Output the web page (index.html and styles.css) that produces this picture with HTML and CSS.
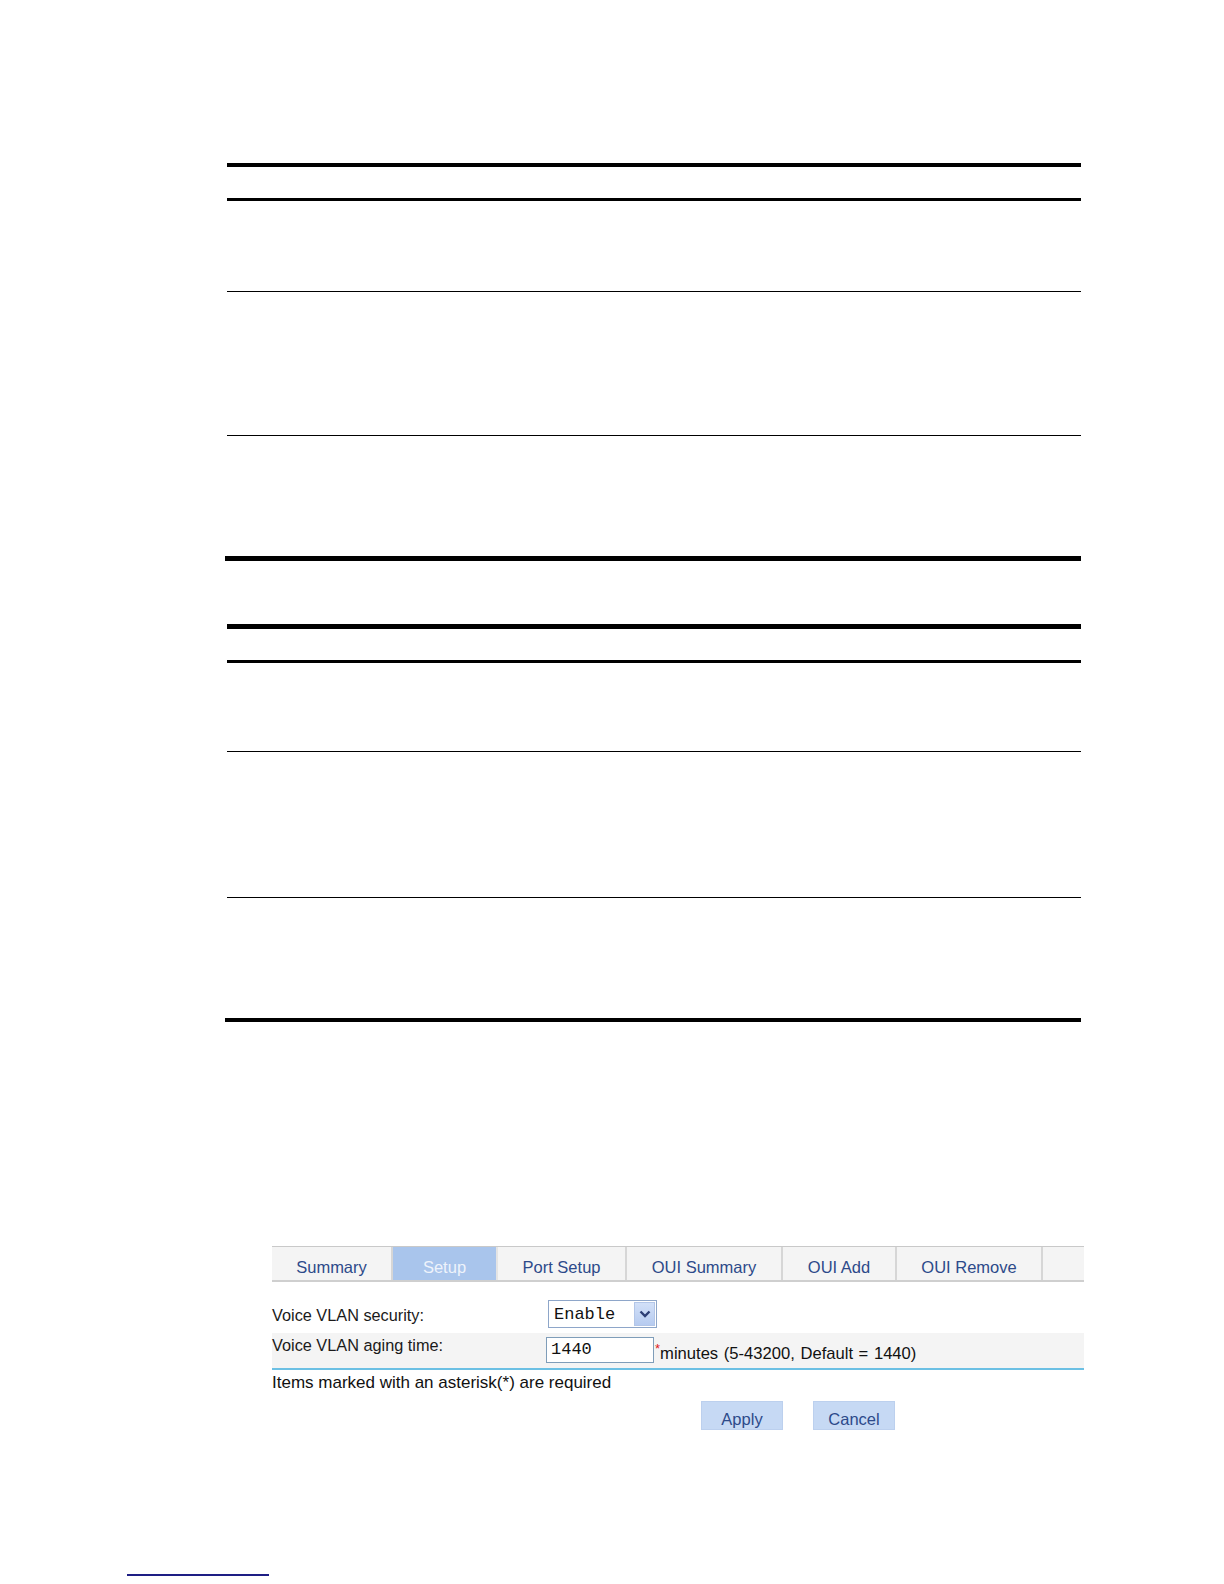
FILE: index.html
```html
<!DOCTYPE html>
<html>
<head>
<meta charset="utf-8">
<link rel="stylesheet" href="styles.css">
</head>
<body>
<div class="page">
  <div class="doc">
    <div class="table t1">
      <div class="rule r4"></div>
      <div class="row h31"></div>
      <div class="rule r3"></div>
      <div class="row h90"></div>
      <div class="rule r1"></div>
      <div class="row h143"></div>
      <div class="rule r1"></div>
      <div class="row h120"></div>
      <div class="rule r5 wide"></div>
    </div>
    <div class="table t2">
      <div class="rule r5"></div>
      <div class="row h31"></div>
      <div class="rule r3"></div>
      <div class="row h88"></div>
      <div class="rule r1"></div>
      <div class="row h145"></div>
      <div class="rule r1"></div>
      <div class="row h120"></div>
      <div class="rule r4 wide"></div>
    </div>
  </div>

  <div class="ui">
    <div class="tabs">
      <div class="tab w121">Summary</div>
      <div class="tab w105 active">Setup</div>
      <div class="tab w129">Port Setup</div>
      <div class="tab w156">OUI Summary</div>
      <div class="tab w114">OUI Add</div>
      <div class="tab w146">OUI Remove</div>
      <div class="tab fill"></div>
    </div>
    <div class="form">
      <div class="frow first">
        <div class="label">Voice VLAN security:</div>
        <div class="select">
          <span class="sel-text">Enable</span>
          <span class="sel-btn">
            <svg width="12" height="8" viewBox="0 0 12 8"><path d="M1.5 1.5 L6 6 L10.5 1.5" fill="none" stroke="#2c3e74" stroke-width="2.4"/></svg>
          </span>
        </div>
      </div>
      <div class="frow second">
        <div class="label">Voice VLAN aging time:</div>
        <div class="input">1440</div>
        <span class="ast">*</span><span class="hint">minutes (5-43200, Default = 1440)</span>
      </div>
    </div>
    <div class="note">Items marked with an asterisk(*) are required</div>
    <div class="buttons">
      <div class="btn">Apply</div>
      <div class="btn">Cancel</div>
    </div>
  </div>

  <div class="footnote"></div>
</div>
</body>
</html>
```

FILE: styles.css
```css
html, body {
  margin: 0;
  padding: 0;
  background: #ffffff;
}

.page {
  padding-top: 163px;
  font-family: "Liberation Sans", Arial, sans-serif;
}

.doc {
  margin-left: 227px;
  width: 854px;
  display: flex;
  flex-direction: column;
  gap: 63px;
}

.table {
  display: flex;
  flex-direction: column;
}

.rule { background: #000; }
.r1 { height: 1px; }
.r3 { height: 3px; }
.r4 { height: 4px; }
.r5 { height: 5px; }
.wide { margin-left: -2px; }

.h31 { height: 31px; }
.h88 { height: 88px; }
.h90 { height: 90px; }
.h120 { height: 120px; }
.h143 { height: 143px; }
.h145 { height: 145px; }

/* UI screenshot */
.ui {
  margin-top: 224px;
  margin-left: 272px;
  width: 812px;
  font-size: 16px;
}

.tabs {
  display: flex;
  height: 33px;
  border-top: 1px solid #c9c9c9;
  border-bottom: 2px solid #cfcfcf;
  background: #f4f4f4;
}

.tab {
  display: flex;
  align-items: center;
  justify-content: center;
  color: #2d4a8a;
  font-size: 16.5px;
  border-right: 2px solid #d6d6d6;
  box-sizing: border-box;
  padding-top: 8px;
}
.tab.active {
  background: #a9c5ec;
  color: #eef3fb;
  border-right-color: #e4e4e4;
}
.w121 { width: 121px; }
.w105 { width: 105px; }
.w129 { width: 129px; }
.w156 { width: 156px; }
.w114 { width: 114px; }
.w146 { width: 146px; }
.tab.fill { flex: 1; border-right: none; }

.form {
  margin-top: 14px;
  border-bottom: 2px solid #6cc0e4;
}

.frow {
  display: flex;
  align-items: flex-start;
  color: #111;
}
.frow.first {
  height: 37px;
}
.frow.second {
  height: 35px;
  background: #f4f4f4;
}

.label {
  width: 274px;
  font-size: 16.3px;
  color: #1a1a1a;
}
.first .label { padding-top: 10px; }
.second .label { padding-top: 3px; }

.select {
  margin-top: 4px;
  margin-left: 2px;
  width: 109px;
  height: 28px;
  box-sizing: border-box;
  border: 1px solid #8ea6c9;
  background: #fff;
  display: flex;
  align-items: center;
  justify-content: space-between;
}
.sel-text {
  font-family: "Liberation Mono", "Courier New", monospace;
  font-size: 17px;
  padding-left: 5px;
  color: #111;
}
.sel-btn {
  width: 21px;
  height: 24px;
  margin-right: 1px;
  background: linear-gradient(#d2e0f8, #b6cbf0);
  border: 1px solid #b3c6e8;
  box-sizing: border-box;
  display: flex;
  align-items: center;
  justify-content: center;
}

.input {
  margin-top: 4px;
  width: 108px;
  height: 26px;
  box-sizing: border-box;
  border: 1px solid #7f9db9;
  background: #fff;
  font-family: "Liberation Mono", "Courier New", monospace;
  font-size: 17px;
  padding-left: 4px;
  line-height: 24px;
  color: #111;
}

.ast {
  color: #e02020;
  font-size: 13px;
  margin-top: 8px;
  margin-left: 1px;
}
.hint {
  font-size: 16.6px;
  margin-top: 11px;
  color: #111;
  word-spacing: 1px;
}

.note {
  margin-top: 3px;
  font-size: 17px;
  color: #111;
  line-height: 20px;
}

.buttons {
  display: flex;
  gap: 30px;
  margin-top: 8px;
  margin-left: 429px;
}
.btn {
  width: 82px;
  height: 29px;
  box-sizing: border-box;
  background: #c6d9f4;
  border: 1px solid #bcd0ee;
  color: #2d4a8a;
  font-size: 16.5px;
  display: flex;
  align-items: flex-end;
  justify-content: center;
  line-height: 20px;
}

.footnote {
  margin-top: 144px;
  margin-left: 127px;
  width: 142px;
  height: 2px;
  background: #1e1e84;
}
```
